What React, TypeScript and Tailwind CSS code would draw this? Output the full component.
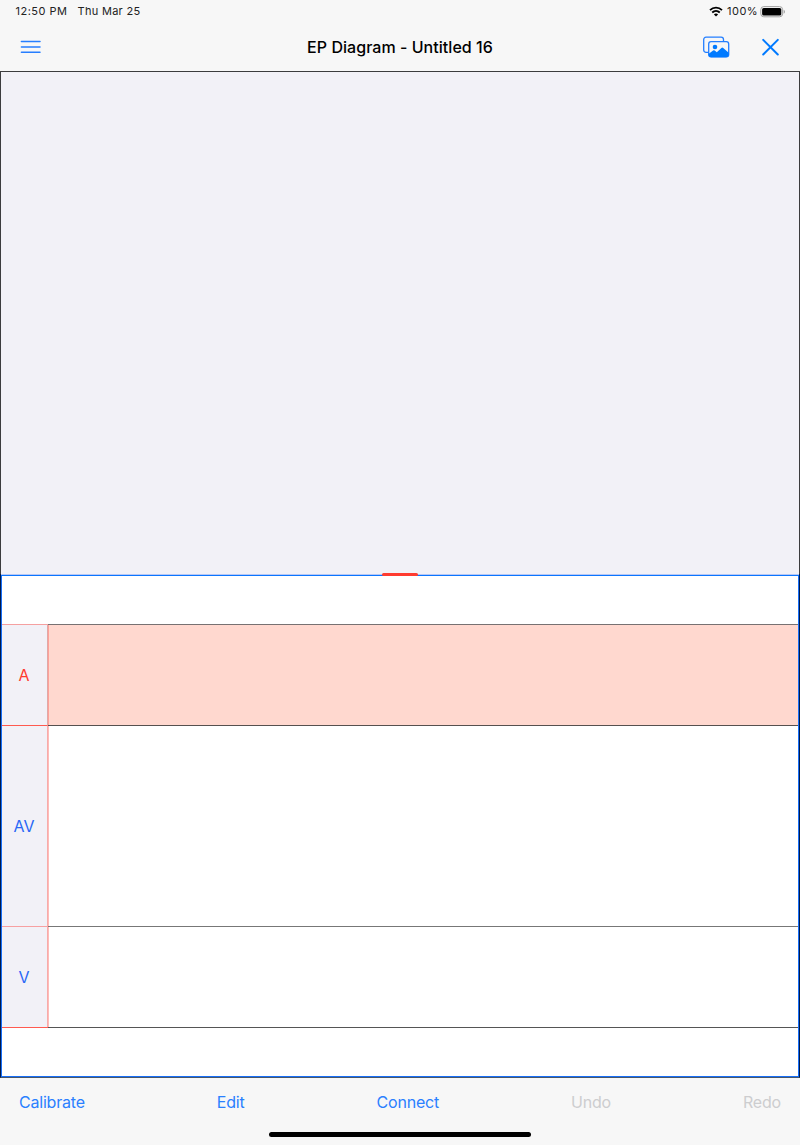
import React from "react";

const regions = [
  { label: "A", height: "h-[101px]", text: "text-[#ff3b30]", fill: "bg-[#ffd8cf]", line: "border-[#777172]", labelLine: "border-t-[#f5a0a0]", edge: "border-r-[#dfa9a8]" },
  { label: "AV", height: "h-[201px]", text: "text-[#2a68f6]", fill: "bg-white", line: "border-[#56504f]", labelLine: "border-t-[#ff5a50]", edge: "border-r-[#f7abaa]" },
  { label: "V", height: "h-[101px]", text: "text-[#2a68f6]", fill: "bg-white", line: "border-[#777777]", labelLine: "border-t-[#f7a0a2]", edge: "border-r-[#f7abaa]" },
];

function StatusBar() {
  return (
    <div className="flex h-[23px] items-center justify-between pl-[15.5px] pr-[14px] text-[11px] leading-[23px] text-[#222]">
      <div className="flex gap-[9px]">
        <span className="w-[53px] whitespace-nowrap tracking-[0.5px]">12:50 PM</span>
        <span className="whitespace-nowrap tracking-[0.3px]">Thu Mar 25</span>
      </div>
      <div className="flex items-center">
        <svg className="mr-[4px]" width="14" height="11" viewBox="0 0 14 11" fill="none" stroke="#000" strokeWidth="1.8">
          <path d="M1 4.1C4.4 .8 9.6 .8 13 4.1" />
          <path d="M3.2 6.5C5.4 4.4 8.6 4.4 10.8 6.5" />
          <path d="M4.9 8.4C6.1 7.3 7.9 7.3 9.1 8.4L7 10.5Z" fill="#000" stroke="none" />
        </svg>
        <span className="w-[33px] whitespace-nowrap tracking-[0.5px]">100%</span>
        <svg width="26" height="12" viewBox="0 0 26 12">
          <rect x=".8" y=".6" width="21.8" height="10.2" rx="3" fill="none" stroke="#a0a0a0" />
          <rect x="2.1" y="1.9" width="19.2" height="7.6" rx="1.6" fill="#000" />
          <path d="M23.7 3.8v4c1.6-.7 1.6-3.3 0-4Z" fill="#999" />
        </svg>
      </div>
    </div>
  );
}

function NavigationBar() {
  return (
    <div className="grid h-12 grid-cols-[1fr_auto_1fr] items-center pl-5 pr-5 text-[#007aff]">
      <button aria-label="Menu" className="w-fit">
        <svg width="21" height="15" viewBox="0 0 21 15" stroke="#267eff" strokeWidth="1.5" strokeLinecap="round">
          <path d="M1.4 1.5h18.6M1.4 6.9h18.6M1.4 12.3h18.6" />
        </svg>
      </button>
      <h1 className="whitespace-nowrap text-[16px] font-medium leading-6 tracking-[0.04px] text-black">EP Diagram - Untitled 16</h1>
      <div className="flex items-center justify-end gap-[31px]">
        <button aria-label="Photos">
          <svg width="28" height="22" viewBox="0 0 28 22" fill="none">
            <rect x="1.7" y="1.2" width="19.8" height="15.1" rx="2.3" stroke="#247fff" strokeWidth="1.3" />
            <rect x="6.7" y="5.6" width="20" height="15.2" rx="2.3" fill="#f7f7f7" stroke="#247fff" strokeWidth="1.3" />
            <circle cx="13" cy="11" r="2.3" fill="#007aff" />
            <path d="m6.5 18 4.6-3.5q.8-.6 1.6 0l2.1 1.7 4.6-4.2q.9-.8 1.8 0l5.5 4.7v2.1q0 2.4-2.4 2.4H9q-2.5 0-2.5-2.4Z" fill="#007aff" />
          </svg>
        </button>
        <button aria-label="Close">
          <svg width="19" height="18" viewBox="0 0 19 18" stroke="#007aff" strokeWidth="2" strokeLinecap="round">
            <path d="m2.2 1.9 14.6 14.6M16.8 1.9l-14.6 14.6" />
          </svg>
        </button>
      </div>
    </div>
  );
}

export default function App() {
  return (
    <main className="flex h-[1145px] w-[800px] flex-col overflow-hidden bg-[#f7f7f7] font-['Inter','Liberation_Sans',sans-serif]">
      <header className="h-[71px] shrink-0">
        <StatusBar />
        <NavigationBar />
      </header>
      <section className="h-[503px] shrink-0 border-x border-t border-[#3c3c3e] bg-[#f2f1f7]" />
      <section className="relative flex h-[504px] shrink-0 flex-col border-x border-b border-x-[#001a4c] border-b-[#46566a] bg-white">
        <div className="flex flex-1 flex-col border-x border-b border-[#176ff8]">
          <div className="-mx-px h-[2px] shrink-0 border-t border-[#b7c7f5] bg-[#0a75ff]" />
          <div className="h-12 shrink-0" />
          {regions.map((region) => (
            <div key={region.label} className={`flex shrink-0 ${region.height}`}>
              <div className={`flex w-[46px] shrink-0 items-center justify-center border-r border-t bg-[#f2f1f7] pr-px text-[16px] font-normal ${region.text} ${region.labelLine} ${region.edge}`}>
                {region.label}
              </div>
              <div className={`flex-1 border-t ${region.line} ${region.fill}`}>
                <div className="h-full w-px bg-[#ff3b30]/35" />
              </div>
            </div>
          ))}
          <div className="flex h-px shrink-0">
            <div className="w-[46px] bg-[#ff5a50]" />
            <div className="flex-1 bg-[#555]" />
          </div>
        </div>
        <div className="absolute left-[381px] top-[-1px] h-[3px] w-[36px] rounded-full bg-[#ff3b30]" />
      </section>
      <footer className="flex h-[67px] shrink-0 flex-col items-center">
        <nav className="flex h-12 w-full items-center justify-between px-[19px] text-[16px] font-normal tracking-[-0.2px] text-[#2a80ff]">
          <button>Calibrate</button>
          <button>Edit</button>
          <button>Connect</button>
          <button disabled className="text-[#cdcdcf]">Undo</button>
          <button disabled className="text-[#cdcdcf]">Redo</button>
        </nav>
        <div className="mt-[6px] h-[5px] w-[262px] rounded-full bg-black" />
      </footer>
    </main>
  );
}
